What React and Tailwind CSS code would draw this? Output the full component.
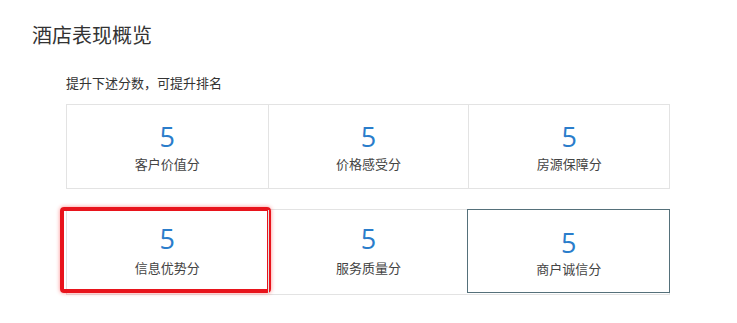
import React from "react";

const rowOne = [
  { score: 5, label: "客户价值分" },
  { score: 5, label: "价格感受分" },
  { score: 5, label: "房源保障分" },
];

const rowTwo = [
  { score: 5, label: "信息优势分", marked: true },
  { score: 5, label: "服务质量分" },
  { score: 5, label: "商户诚信分", active: true },
];

const ScoreCell = ({ item, first, numTop, labelTop }) => (
  <div
    className={`relative flex flex-col items-center h-full ${
      item.active
        ? "border border-[#55707a] -m-px"
        : first
        ? ""
        : "border-l border-[#e3e3e3]"
    }`}
  >
    <div
      className="text-[27px] leading-none text-[#2a7dcb]"
      style={{
        fontFamily: '"Open Sans", "Noto Sans", sans-serif',
        marginTop: item.active ? numTop + 4 : numTop,
      }}
    >
      {item.score}
    </div>
    <div
      className="text-[13px] leading-none text-[#444]"
      style={{ marginTop: item.active ? labelTop - 3 : labelTop }}
    >
      {item.label}
    </div>
    {item.marked && (
      <div className="absolute left-[-7px] right-[-3px] top-[-3px] bottom-[1px] border-[4px] border-[#e8141c] rounded-[4px] shadow-[0_0_4px_rgba(255,0,0,0.45)]"></div>
    )}
  </div>
);

export default function App() {
  return (
    <div
      className="w-[737px] h-[323px] bg-white pl-[32px] pt-[21px]"
      style={{ fontFamily: '"Noto Sans CJK SC", "Noto Sans", sans-serif' }}
    >
      <h1 className="text-[20px] leading-[28px] text-[#333] font-normal">
        酒店表现概览
      </h1>
      <div className="ml-[34px] mt-[26px]">
        <p className="text-[13px] leading-[16px] text-[#333]">
          提升下述分数，可提升排名
        </p>
        <div className="mt-[13px] w-[604px] h-[85px] grid grid-cols-3 border border-[#e3e3e3]">
          {rowOne.map((item, i) => (
            <ScoreCell key={item.label} item={item} first={i === 0} numTop={18} labelTop={7} />
          ))}
        </div>
        <div className="mt-[20px] w-[604px] h-[86px] grid grid-cols-3 border border-[#e3e3e3]">
          {rowTwo.map((item, i) => (
            <ScoreCell key={item.label} item={item} first={i === 0} numTop={15} labelTop={9} />
          ))}
        </div>
      </div>
    </div>
  );
}
